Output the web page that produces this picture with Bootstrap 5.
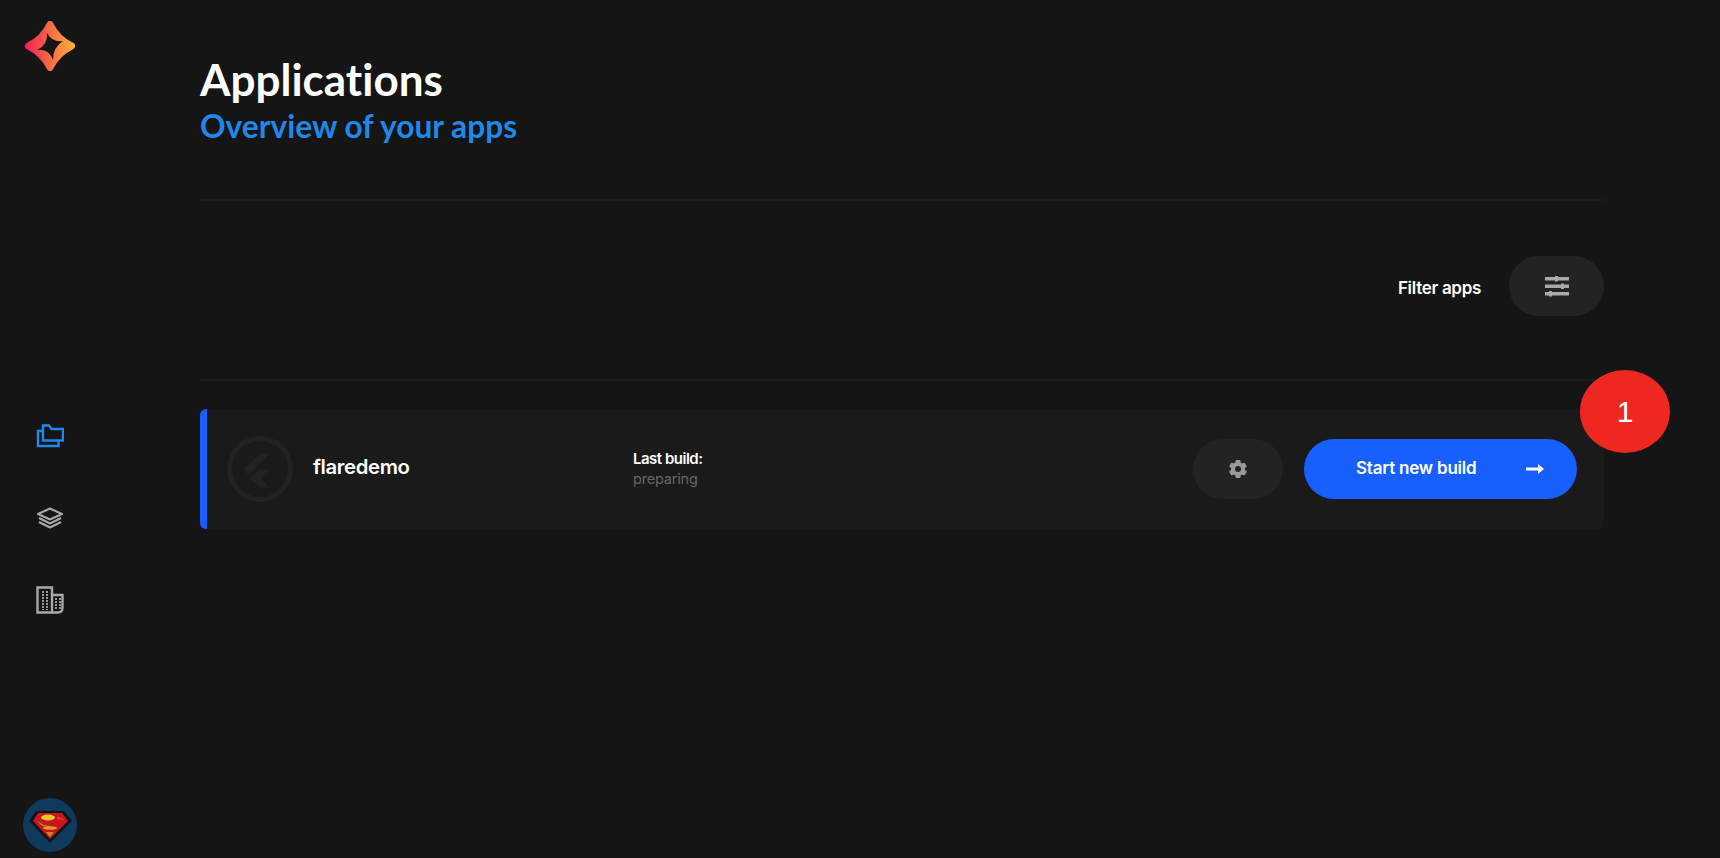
<!DOCTYPE html>
<html>
	<head>
		<meta charset="utf-8">
		<meta name="viewport" content="width=device-width, initial-scale=1">
		<link href="https://cdn.jsdelivr.net/npm/bootstrap@5.3.3/dist/css/bootstrap.min.css" rel="stylesheet" crossorigin="anonymous">
		<script src="https://cdn.jsdelivr.net/npm/bootstrap@5.3.3/dist/js/bootstrap.bundle.min.js" crossorigin="anonymous"></script>
		<style>
			body { background: #151515; color: #fff; font-family: "Inter", "Liberation Sans", sans-serif; height: 858px; overflow: hidden; }
			.side-rail { width: 100px; height: 858px; padding-top: 21px; padding-bottom: 6px; margin-right: 100px; }
			.side-nav { margin-top: 324px; }
			.nav-slot { height: 82px; }
			.main-area { width: 1404px; }
			.page-title { font-family: "Lato", sans-serif; font-variant-ligatures: none; font-size: 44px; font-weight: 700; line-height: 57px; margin: 51px 0 0; }
			.page-sub { font-family: "Lato", sans-serif; font-variant-ligatures: none; font-size: 31.7px; font-weight: 700; line-height: 36px; color: #1f88e8; margin: 0; }
			.rule-line { height: 2px; background: #1b1b1b; }
			.rule-one { margin-top: 55px; }
			.filter-bar { padding: 55px 0 63px; }
			.filter-label { font-size: 17px; font-weight: 600; letter-spacing: -0.3px; margin-right: 28px; margin-top: 6px; }
			.pill-dark { background: #232323; height: 60px; border-radius: 30px; border: 0; padding: 0; }
			.pill-filter { width: 95px; }
			.pill-gear { width: 90px; }
			.app-row { height: 120px; margin-top: 28px; background: #1a1a1a; border-left: 7px solid #175fff; border-radius: 6px; padding: 0 27px 0 20px; }
			.app-mark { width: 66px; height: 66px; }
			.app-title { width: 340px; padding-left: 20px; padding-bottom: 4px; font-size: 20.3px; font-weight: 600; letter-spacing: -0.35px; }
			.build-head { font-size: 15px; font-weight: 600; letter-spacing: -0.5px; line-height: 20px; }
			.build-state { font-size: 14.5px; color: #666; letter-spacing: -0.2px; line-height: 20px; }
			.action-set { gap: 21px; }
			.build-btn { width: 273px; height: 60px; background: #175fff; border: 0; border-radius: 30px; color: #fff; font-size: 17px; font-weight: 600; letter-spacing: -0.2px; padding: 0 33px 0 52px; }
			.count-dot { position: absolute; left: 1373px; top: -39px; width: 90px; height: 83px; border-radius: 50%; background: #ee2820; font-family: "Liberation Sans", sans-serif; font-size: 30px; }
		</style>
		<title>Applications</title>
	</head>
	<body class="m-0">
		<div class="d-flex">
			<div class="side-rail d-flex flex-column align-items-center flex-shrink-0">
				<svg width="50" height="50" viewBox="25 21 50 50">
					<defs>
						<linearGradient id="starGrad" gradientUnits="userSpaceOnUse" x1="25" y1="46" x2="75" y2="46">
							<stop offset="0" stop-color="#f0204f"/>
							<stop offset="1" stop-color="#ffb53c"/>
						</linearGradient>
					</defs>
					<path fill="url(#starGrad)" stroke="url(#starGrad)" stroke-width="7" stroke-linejoin="round" d="M50 24.500 Q57 39 71.500 46 Q57 53 50 67.500 Q43 53 28.500 46 Q43 39 50 24.500 Z"/>
					<path fill="#151515" d="M47 33 Q52 42.500 63 41 Q53 47 53 60 Q48.500 48 37 50 Q48 45 47 33 Z"/>
				</svg>
				<div class="side-nav">
					<div class="nav-slot d-flex align-items-center justify-content-center">
						<svg width="28" height="24" viewBox="0 0 28 24" fill="none" stroke="#1f88e8" stroke-width="2.400">
							<path d="M6 7H2V22H22.500V17"/>
							<path d="M7 1.500V16.500H27V5H15.500L13 1.500Z"/>
						</svg>
					</div>
					<div class="nav-slot d-flex align-items-center justify-content-center">
						<svg width="28" height="22" viewBox="0 0 28 22" fill="none" stroke="#a8a8a8" stroke-width="2" stroke-linejoin="round">
							<path d="M14 1.500L26 7L14 12.500L2 7Z"/>
							<path d="M3 11L14 16.500L25 11"/>
							<path d="M3 15L14 20.500L25 15"/>
						</svg>
					</div>
					<div class="nav-slot d-flex align-items-center justify-content-center">
						<svg width="28" height="28" viewBox="0 0 28 28" fill="none" stroke="#a8a8a8" stroke-width="2.400">
							<path d="M1.500 1.500H16V26.500H1.500Z"/>
							<path d="M16 9H26.500V22Q26.500 26.500 22 26.500H16"/>
							<path stroke-width="1.800" stroke-dasharray="2 1" d="M7 5V24M11 5V24M20 12V23M24 12V23"/>
						</svg>
					</div>
				</div>
				<div class="mt-auto">
					<svg width="54" height="54" viewBox="0 0 54 54" class="d-block">
						<circle cx="27" cy="27" r="27" fill="#0f3a5c"/>
						<path fill="#10151c" d="M13 13H41L49 23L27 45L6 23Z"/>
						<path fill="#c9151d" d="M15 15H39L45 23L27 41L10 23Z"/>
						<ellipse cx="25" cy="19.500" rx="7" ry="3" fill="#f0c52c"/>
						<path fill="#b9821f" d="M15 23Q17 28 23 29L32 30Q27 28 22 27Q18 26 15 23Z"/>
						<ellipse cx="27" cy="30" rx="7" ry="1.800" fill="#d9a027"/>
						<path fill="#c9851f" d="M23 34H31L27 39Z"/>
						<path fill="#e8402a" d="M34 19Q40 19 41 23Q37 21 34 21Z"/>
					</svg>
				</div>
			</div>
			<div class="main-area">
				<h1 class="page-title">Applications</h1>
				<p class="page-sub">Overview of your apps</p>
				<div class="rule-line rule-one"></div>
				<div class="filter-bar d-flex align-items-center justify-content-end">
					<span class="filter-label">Filter apps</span>
					<button class="pill-dark pill-filter d-flex align-items-center justify-content-center" type="button">
						<svg width="24" height="21" viewBox="0 0 24 21" fill="#aaa">
							<rect x="0" y="1" width="24" height="3.500"/>
							<rect x="0" y="8.500" width="24" height="3.500"/>
							<rect x="0" y="16" width="24" height="3.500"/>
							<rect x="10" y="0" width="3" height="5.500"/>
							<rect x="16" y="7.500" width="3" height="5.500"/>
							<rect x="4" y="15" width="3" height="5.500"/>
						</svg>
					</button>
				</div>
				<div class="rule-line"></div>
				<div class="app-row d-flex align-items-center position-relative">
					<svg class="app-mark flex-shrink-0" viewBox="0 0 64 64">
						<circle cx="32" cy="32" r="29.500" fill="none" stroke="#222" stroke-width="5"/>
						<path fill="#222" d="M15.700 32.300L32.300 17.300H41L20.700 38ZM22 40.700L32.300 32.300H41L33 41L41 50H32.300Z"/>
					</svg>
					<div class="app-title">flaredemo</div>
					<div>
						<div class="build-head">Last build:</div>
						<div class="build-state">preparing</div>
					</div>
					<div class="ms-auto d-flex action-set">
						<button class="pill-dark pill-gear d-flex align-items-center justify-content-center" type="button">
							<svg width="20" height="20" viewBox="0 0 20 20">
								<g fill="#999">
									<rect x="7.500" y="1" width="5" height="18" rx="1"/>
									<rect x="7.500" y="1" width="5" height="18" rx="1" transform="rotate(60 10 10)"/>
									<rect x="7.500" y="1" width="5" height="18" rx="1" transform="rotate(120 10 10)"/>
									<circle cx="10" cy="10" r="7"/>
								</g>
								<circle cx="10" cy="10" r="3" fill="#232323"/>
							</svg>
						</button>
						<button class="build-btn d-flex align-items-center justify-content-between" type="button">
							<span>Start new build</span>
							<svg width="18" height="12" viewBox="0 0 18 12" fill="#fff"><path d="M0 4.500H12V1L18 6L12 11V7.500H0Z"/></svg>
						</button>
					</div>
					<div class="count-dot d-flex align-items-center justify-content-center">1</div>
				</div>
			</div>
		</div>
	</body>
</html>
